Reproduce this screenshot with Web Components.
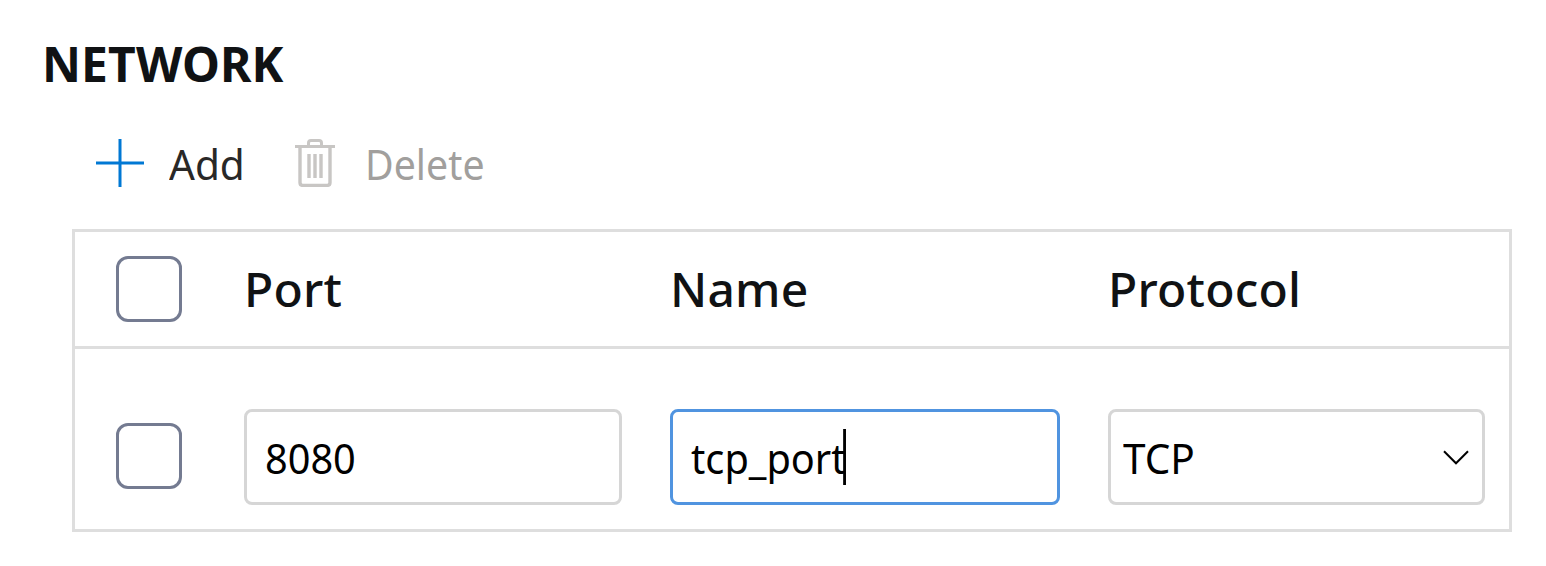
<!DOCTYPE html>
<html lang="en">
<head>
<meta charset="utf-8">
<title>Network</title>
<style>
body{margin:0;background:#fff;font-family:"Noto Sans","Open Sans",sans-serif;color:#000}
</style>
</head>
<body>
<network-panel></network-panel>
<script>
const define=(name,html)=>customElements.define(name,class extends HTMLElement{
  constructor(){
    super();
    const t=document.createElement('template');
    t.innerHTML=html;
    this.attachShadow({mode:'open'}).append(t.content.cloneNode(true));
  }
});

define('section-title',`<style>
:host{display:block}
h2{margin:0;font:700 48px/60px "Noto Sans",sans-serif;letter-spacing:var(--track,0);color:#101214}
</style><h2><slot></slot></h2>`);

define('icon-add',`<style>:host{display:block;width:48px;height:48px}svg{display:block}</style>
<svg width="48" height="48" fill="none"><path d="M24 0V48M0 24H48" stroke="#0078d4" stroke-width="3"/></svg>`);

define('icon-trash',`<style>:host{display:block;width:40px;height:48px}svg{display:block}</style>
<svg width="40" height="48" fill="none" stroke="#c8c6c4" stroke-width="3"><path d="M0 7.500H40M13.500 7V4Q13.500 1.500 16 1.500H24Q26.500 1.500 26.500 4V7"/><path stroke-width="3.400" d="M5 8V43.400Q5 46.400 8 46.400H32Q35 46.400 35 43.400V8M14 15V39M20 15V39M26 15V39"/></svg>`);

define('command-button',`<style>
:host{display:flex;align-items:center}
button{all:unset;display:flex;align-items:center;font:400 42px/50px "Noto Sans",sans-serif;color:var(--ink,#292827)}
.label{margin-left:var(--gap,24px);padding-top:2px;white-space:nowrap;transform:scaleX(var(--sx,1));transform-origin:0 0}
</style><button><slot name="icon"></slot><span class="label"><slot></slot></span></button>`);

define('check-box',`<style>
:host{display:block;box-sizing:border-box;width:66px;height:66px;border:3px solid #747b91;border-radius:12px;background:#fff}
</style>`);

define('column-header',`<style>
:host{display:block;font:550 48px/60px "Noto Sans",sans-serif;letter-spacing:.2px;color:#101214;white-space:nowrap;margin-top:-1px}
</style><slot></slot>`);

define('text-field',`<style>
:host{display:flex;align-items:center;box-sizing:border-box;height:96px;border:3px solid var(--edge,#d6d6d6);border-radius:8px;padding-left:18px;background:#fff;font:400 42px/56px "Noto Sans",sans-serif}
.value{display:block;position:relative;padding-top:2px;white-space:nowrap;transform:scaleX(var(--sx,1));transform-origin:0 0}
.caret{display:none;position:absolute;right:-.5px;top:1px;width:calc(3px / var(--sx,1));height:56px;background:#000}
:host([focused]){--edge:#5094e0}
:host([focused]) .caret{display:block}
</style><span class="value"><slot></slot><i class="caret"></i></span>`);

define('select-field',`<style>
:host{display:flex;align-items:center;justify-content:space-between;box-sizing:border-box;height:96px;border:3px solid #d6d6d6;border-radius:8px;padding:0 12px;background:#fff;font:400 42px/56px "Noto Sans",sans-serif}
span{display:block;padding-top:2px;transform:scaleX(var(--sx,1));transform-origin:0 0}
svg{display:block}
</style><span><slot></slot></span>
<svg width="28" height="16" fill="none" stroke="#000" stroke-width="2"><path d="M2 2.300L14 14.300L26 2.300"/></svg>`);

define('table-row',`<style>
:host{display:grid;grid-template-columns:66px 62px 378px 48px 390px 48px 377px;align-items:center;padding:var(--pad,0) 24px var(--pad-bottom,0) 41px;box-sizing:border-box;height:var(--h)}
::slotted(:nth-child(1)){grid-column:1}
::slotted(check-box){margin-top:var(--box-shift,0)}
::slotted(:nth-child(2)){grid-column:3}
::slotted(:nth-child(3)){grid-column:5}
::slotted(:nth-child(4)){grid-column:7}
</style><slot></slot>`);

define('port-table',`<style>
:host{display:block;box-sizing:border-box;width:1440px;border:3px solid #dedede}
.head{border-bottom:3px solid #dedede}
</style><div class="head"><slot name="head"></slot></div><slot></slot>`);

define('network-panel',`<style>
:host{display:flex;flex-direction:column;box-sizing:border-box;height:566px;padding:34px 0 0 42px}
nav{display:flex;align-items:center;height:50px;margin:44px 0 0 54px}
.del{margin-left:48px}
port-table{margin:41px 0 0 30px}
</style>
<section-title style="--track:.1px">NETWORK</section-title>
<nav>
<command-button style="--gap:24.500px;--sx:.965"><icon-add slot="icon"></icon-add>Add</command-button>
<command-button class="del" style="--ink:#a19f9d;--gap:29.500px;--sx:.936"><icon-trash slot="icon"></icon-trash>Delete</command-button>
</nav>
<port-table>
<table-row slot="head" style="--h:114px"><check-box></check-box><column-header>Port</column-header><column-header>Name</column-header><column-header>Protocol</column-header></table-row>
<table-row style="--h:180px;--pad:60px;--pad-bottom:24px;--box-shift:-2px"><check-box></check-box><text-field style="--sx:.945">8080</text-field><text-field focused style="--sx:.945">tcp_port</text-field><select-field style="--sx:.965">TCP</select-field></table-row>
</port-table>`);
</script>
</body>
</html>
